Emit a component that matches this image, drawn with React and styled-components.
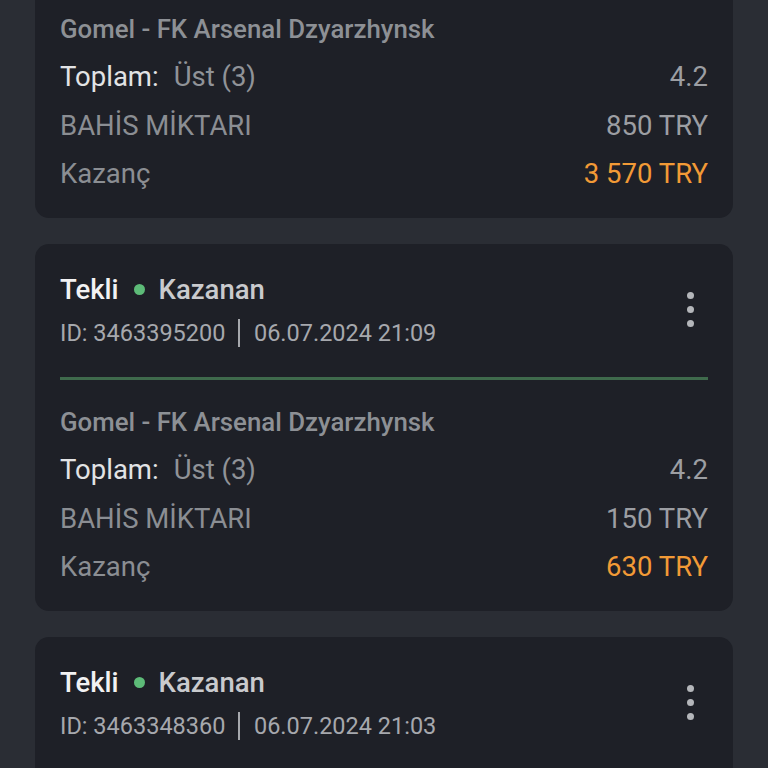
import React from "react";
import styled, { createGlobalStyle } from "styled-components";

const Global = createGlobalStyle`
  html, body { margin: 0; padding: 0; background: #2a2d34; }
  body { font-family: Roboto, "Noto Sans", sans-serif; overflow: hidden; }
`;

const Page = styled.div`
  width: 768px;
  height: 768px;
  overflow: hidden;
  background: #2a2d34;
`;

const List = styled.div`
  display: flex;
  flex-direction: column;
  gap: 26px;
  padding: 0 35px;
  margin-top: -149px;
`;

const Card = styled.div`
  background: #1e2027;
  border-radius: 14px;
  padding: 29px 25px 21px;
  display: flex;
  flex-direction: column;
`;

const Header = styled.div`
  display: flex;
  align-items: center;
  justify-content: space-between;
`;

const HeadText = styled.div`
  display: flex;
  flex-direction: column;
  gap: 12px;
`;

const TitleRow = styled.div`
  display: flex;
  align-items: center;
  height: 32px;
  font-size: 27.5px;
  font-weight: 500;
`;

const Type = styled.span`
  color: #f2f2f3;
`;

const Dot = styled.span`
  width: 11px;
  height: 11px;
  border-radius: 50%;
  background: #5dbb78;
  margin: 0 14px 0 15px;
`;

const Status = styled.span`
  color: #c9cacd;
`;

const Meta = styled.div`
  display: flex;
  align-items: center;
  height: 32px;
  font-size: 23.5px;
  color: #a6a8ad;
`;

const Sep = styled.span`
  width: 1.5px;
  height: 28px;
  background: #a6a8ad;
  margin: 0 14px 0 13px;
`;

const Menu = styled.div`
  display: flex;
  flex-direction: column;
  gap: 7px;
  padding-right: 14px;
  margin-top: -4px;
`;

const MenuDot = styled.span`
  width: 7px;
  height: 7px;
  border-radius: 50%;
  background: #b4b6ba;
`;

const Divider = styled.div`
  height: 3px;
  background: #3f6a4c;
  margin: 28px 0 19px;
`;

const Match = styled.div`
  height: 46px;
  display: flex;
  align-items: center;
  font-size: 25.8px;
  font-weight: 500;
  color: #8d9095;
`;

const Row = styled.div`
  height: ${(p) => p.$h || 48}px;
  display: flex;
  align-items: center;
  justify-content: space-between;
  font-size: 27.5px;
  color: #8b8e93;
`;

const Label = styled.span`
  color: ${(p) => (p.$strong ? "#e2e3e5" : "#8b8e93")};
`;

const Light = styled.span`
  color: #909398;
  margin-left: 15px;
`;

const Value = styled.span`
  color: ${(p) => (p.$accent ? "#f29a36" : "#9c9ea3")};
`;

const bets = [
  { id: "3463395200", date: "06.07.2024 21:09", stake: "850 TRY", win: "3 570 TRY" },
  { id: "3463395200", date: "06.07.2024 21:09", stake: "150 TRY", win: "630 TRY" },
  { id: "3463348360", date: "06.07.2024 21:03", stake: "150 TRY", win: "630 TRY" },
];

function BetCard({ bet }) {
  return (
    <Card>
      <Header>
        <HeadText>
          <TitleRow>
            <Type>Tekli</Type>
            <Dot />
            <Status>Kazanan</Status>
          </TitleRow>
          <Meta>
            ID: {bet.id}
            <Sep />
            {bet.date}
          </Meta>
        </HeadText>
        <Menu>
          <MenuDot />
          <MenuDot />
          <MenuDot />
        </Menu>
      </Header>
      <Divider />
      <Match>Gomel - FK Arsenal Dzyarzhynsk</Match>
      <Row $h={48}>
        <span>
          <Label $strong>Toplam:</Label>
          <Light>Üst (3)</Light>
        </span>
        <Value>4.2</Value>
      </Row>
      <Row $h={50}>
        <Label>BAHİS MİKTARI</Label>
        <Value>{bet.stake}</Value>
      </Row>
      <Row $h={47}>
        <Label>Kazanç</Label>
        <Value $accent>{bet.win}</Value>
      </Row>
    </Card>
  );
}

export default function App() {
  return (
    <Page>
      <Global />
      <List>
        {bets.map((b, i) => (
          <BetCard key={i} bet={b} />
        ))}
      </List>
    </Page>
  );
}
